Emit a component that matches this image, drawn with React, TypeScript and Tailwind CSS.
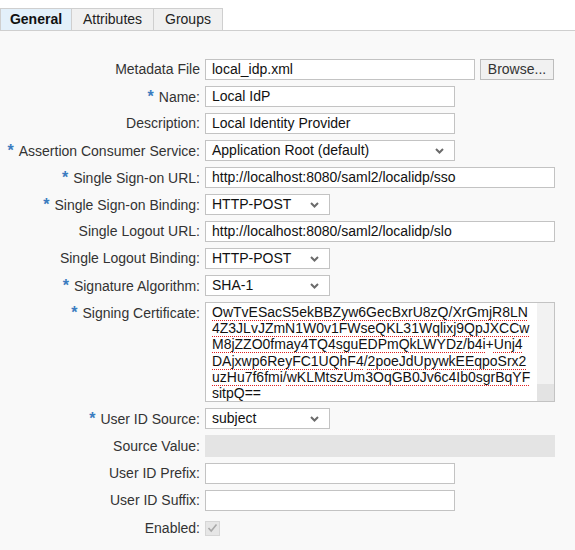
import React from "react";

const font = { fontFamily: '"Liberation Sans", Arial, sans-serif' };

function Label({ children, req, top }: { children: React.ReactNode; req?: boolean; top?: boolean }) {
  return (
    <div className={`flex justify-end text-[14px] text-[#333] whitespace-nowrap ${top ? "items-start pt-[2px]" : "items-center"} h-full`}>
      <span className="leading-[17px]">
        {req && <span className="text-[#3b7cc0] font-bold text-[16px] mr-[5px]">*</span>}
        {children}
      </span>
    </div>
  );
}

function Input({ value, w }: { value?: string; w: string }) {
  return (
    <div className={`${w} h-[21px] border border-[#c3c3c3] bg-white flex items-center pl-[6px] text-[14px] text-[#111]`}>
      {value}
    </div>
  );
}

function Select({ value, w }: { value: string; w: string }) {
  return (
    <div className={`${w} h-[21px] border border-[#c3c3c3] bg-white flex items-center justify-between pl-[6px] pr-[10px] text-[14px] text-[#111]`}>
      <span>{value}</span>
      <svg width="9" height="6" viewBox="0 0 9 6">
        <polyline points="1,1 4.5,4.5 8,1" fill="none" stroke="#6b6b6b" strokeWidth="2" />
      </svg>
    </div>
  );
}

function Wavy({ children }: { children: React.ReactNode }) {
  return (
    <span className="underline decoration-dotted decoration-[#e02020] decoration-[1px] underline-offset-[3px]">{children}</span>
  );
}

const certLines: React.ReactNode[] = [
  <><Wavy>OwTvESacS5ekBBZyw6GecBxrU8zQ/XrGmjR8LN</Wavy></>,
  <><Wavy>4Z3JLvJZmN1W0v1FWseQKL31Wqlixj9QpJXCCw</Wavy></>,
  <><Wavy>M8jZZO0fmay4TQ4sguEDPmQkLWYDz</Wavy>/<Wavy>b4i</Wavy>+<Wavy>Unj4</Wavy></>,
  <><Wavy>DAjxwp6ReyFC1UQhF4</Wavy>/<Wavy>2poeJdUpywkEEqpoSrx2</Wavy></>,
  <><Wavy>uzHu7f6fmi</Wavy>/<Wavy>wKLMtszUm3OqGB0Jv6c4Ib0sgrBqYF</Wavy></>,
  <><Wavy>sitpQ</Wavy>==</>,
];

export default function App() {
  return (
    <div style={font} className="w-[575px] h-[550px] bg-white overflow-hidden">
      <div className="pt-[8px] bg-white border-b border-[#cfcfcf] flex">
        <div className="w-[72px] h-[22px] bg-[#e3f0fa] border border-b-0 border-[#cfcfcf] flex items-center justify-center text-[14px] font-bold text-[#111]">
          General
        </div>
        <div className="w-[82px] h-[22px] bg-[#f0f0f0] border border-l-0 border-b-0 border-[#cfcfcf] flex items-center justify-center text-[14px] text-[#222]">
          Attributes
        </div>
        <div className="w-[69px] h-[22px] bg-[#f0f0f0] border border-l-0 border-b-0 border-[#cfcfcf] flex items-center justify-center text-[14px] text-[#222]">
          Groups
        </div>
      </div>
      <div className="bg-[#f9f9f9] h-full pt-[28px]">
        <div className="grid grid-cols-[200px_1fr] gap-x-[5px] gap-y-[6px]">
          <Label>Metadata File</Label>
          <div className="flex gap-[5px]">
            <Input value="local_idp.xml" w="w-[270px]" />
            <div className="w-[74px] h-[21px] border border-[#bdbdbd] bg-[#f1f1f1] flex items-center justify-center text-[14px] text-[#333]">
              Browse...
            </div>
          </div>

          <Label req>Name:</Label>
          <Input value="Local IdP" w="w-[250px]" />

          <Label>Description:</Label>
          <Input value="Local Identity Provider" w="w-[250px]" />

          <Label req>Assertion Consumer Service:</Label>
          <Select value="Application Root (default)" w="w-[250px]" />

          <Label req>Single Sign-on URL:</Label>
          <Input value="http://localhost:8080/saml2/localidp/sso" w="w-[350px]" />

          <Label req>Single Sign-on Binding:</Label>
          <Select value="HTTP-POST" w="w-[125px]" />

          <Label>Single Logout URL:</Label>
          <Input value="http://localhost:8080/saml2/localidp/slo" w="w-[350px]" />

          <Label>Single Logout Binding:</Label>
          <Select value="HTTP-POST" w="w-[125px]" />

          <Label req>Signature Algorithm:</Label>
          <Select value="SHA-1" w="w-[125px]" />

          <Label req top>Signing Certificate:</Label>
          <div className="w-[350px] h-[100px] border border-[#c3c3c3] bg-white flex">
            <div className="flex-1 pl-[6px] pt-[1px] text-[14px] leading-[16.2px] text-[#111] whitespace-nowrap overflow-hidden">
              {certLines.map((l, i) => (
                <div key={i}>{l}</div>
              ))}
            </div>
            <div className="w-[17px] flex flex-col">
              <div className="flex-1 bg-[#f2f2f2]" />
              <div className="h-[17px] bg-[#e3e3e3]" />
            </div>
          </div>

          <Label req>User ID Source:</Label>
          <Select value="subject" w="w-[125px]" />

          <Label>Source Value:</Label>
          <div className="w-[350px] h-[22px] bg-[#e4e4e4]" />

          <Label>User ID Prefix:</Label>
          <Input w="w-[250px]" />

          <Label>User ID Suffix:</Label>
          <Input w="w-[250px]" />

          <div className="h-[22px]">
            <Label>Enabled:</Label>
          </div>
          <div className="h-[22px] flex items-center">
            <div className="w-[15px] h-[15px] border border-[#d6d6d6] bg-[#e6e6e6] flex items-center justify-center">
              <svg width="11" height="10" viewBox="0 0 11 10">
                <polyline points="1.5,5 4.2,8 9.5,1.5" fill="none" stroke="#a9a9a9" strokeWidth="1.6" />
              </svg>
            </div>
          </div>
        </div>
      </div>
    </div>
  );
}
